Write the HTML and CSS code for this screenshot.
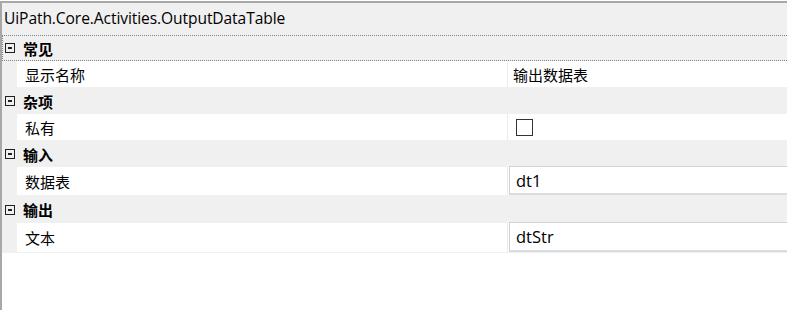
FILE: index.html
```html
<!DOCTYPE html>
<html>
<head>
<meta charset="utf-8">
<link rel="stylesheet" href="styles.css">
</head>
<body>
<div class="grid">
  <div class="header">UiPath.Core.Activities.OutputDataTable</div>
  <div class="cat focus"><span class="box"></span><span class="cat-name">常见</span></div>
  <div class="prop h27"><div class="gutter"></div><div class="name">显示名称</div><div class="value plain">输出数据表</div></div>
  <div class="cat h26"><span class="box"></span><span class="cat-name">杂项</span></div>
  <div class="prop h27"><div class="gutter"></div><div class="name">私有</div><div class="value plain"><span class="check"></span></div></div>
  <div class="cat h26"><span class="box"></span><span class="cat-name">输入</span></div>
  <div class="prop h29"><div class="gutter"></div><div class="name">数据表</div><div class="value"><div class="textbox">dt1</div></div></div>
  <div class="cat h27"><span class="box"></span><span class="cat-name">输出</span></div>
  <div class="prop h30"><div class="gutter"></div><div class="name">文本</div><div class="value"><div class="textbox">dtStr</div></div></div>
  <div class="rest"></div>
</div>
</body>
</html>
```

FILE: styles.css
```css
html, body {
  margin: 0;
  padding: 0;
  background: #ffffff;
}
body {
  width: 787px;
  height: 310px;
  overflow: hidden;
  font-family: "Noto Sans CJK SC", "Noto Sans", sans-serif;
  color: #000;
}
.grid {
  margin-top: 1px;
  height: 309px;
  border-top: 2px solid #a8a8a8;
  border-left: 2px solid #a8a8a8;
  display: flex;
  flex-direction: column;
  box-sizing: border-box;
}
.header {
  height: 33px;
  flex: none;
  background: #f0f0f0;
  font-family: "Open Sans", "Noto Sans", sans-serif;
  font-size: 15.6px;
  line-height: 30px;
  padding-left: 2px;
  border-bottom: 1px dotted #808080;
  box-sizing: border-box;
  letter-spacing: -0.1px;
}
.cat {
  flex: none;
  height: 25px;
  background: #f0f0f0;
  display: flex;
  align-items: center;
  box-sizing: border-box;
  padding-left: 3px;
}
.cat.focus {
  border-bottom: 1px dotted #808080;
  border-left: 1px dotted #808080;
  padding-left: 2px;
}
.h26 { height: 26px; }
.h27 { height: 27px; }
.h29 { height: 29px; }
.h30 { height: 30px; }
.box {
  width: 8px;
  height: 8px;
  border: 1px solid #202020;
  position: relative;
  flex: none;
}
.box::after {
  content: "";
  position: absolute;
  left: 2px;
  top: 3px;
  width: 4px;
  height: 2px;
  background: #202020;
}
.cat-name {
  margin-left: 8px;
  font-size: 15px;
  font-weight: bold;
}
.prop {
  flex: none;
  display: flex;
  background: #ffffff;
}
.gutter {
  width: 15px;
  flex: none;
  background: #f0f0f0;
}
.name {
  flex: none;
  padding-left: 8px;
  font-size: 15px;
  display: flex;
  align-items: center;
  border-right: 1px solid #ececec;
  border-bottom: 1px solid #f0f0f0;
  box-sizing: border-box;
  width: 491px;
}
.value {
  flex: 1;
  display: flex;
  align-items: stretch;
  padding-left: 1px;
  border-bottom: 1px solid #f0f0f0;
}
.value.plain {
  align-items: center;
  padding-left: 5px;
  font-size: 15px;
}
.check {
  box-sizing: border-box;
  width: 17px;
  height: 17px;
  border: 1px solid #333333;
  margin-left: 3px;
}
.textbox {
  flex: 1;
  border: 1px solid #cfd3da;
  border-right: none;
  border-bottom: 2px solid #d8dbe0;
  background: #ffffff;
  font-family: "Open Sans", "Noto Sans", sans-serif;
  font-size: 16.5px;
  padding-left: 6px;
  display: flex;
  align-items: center;
  margin-top: -1px;
}
.rest {
  flex: 1;
  background: #ffffff;
}
```
